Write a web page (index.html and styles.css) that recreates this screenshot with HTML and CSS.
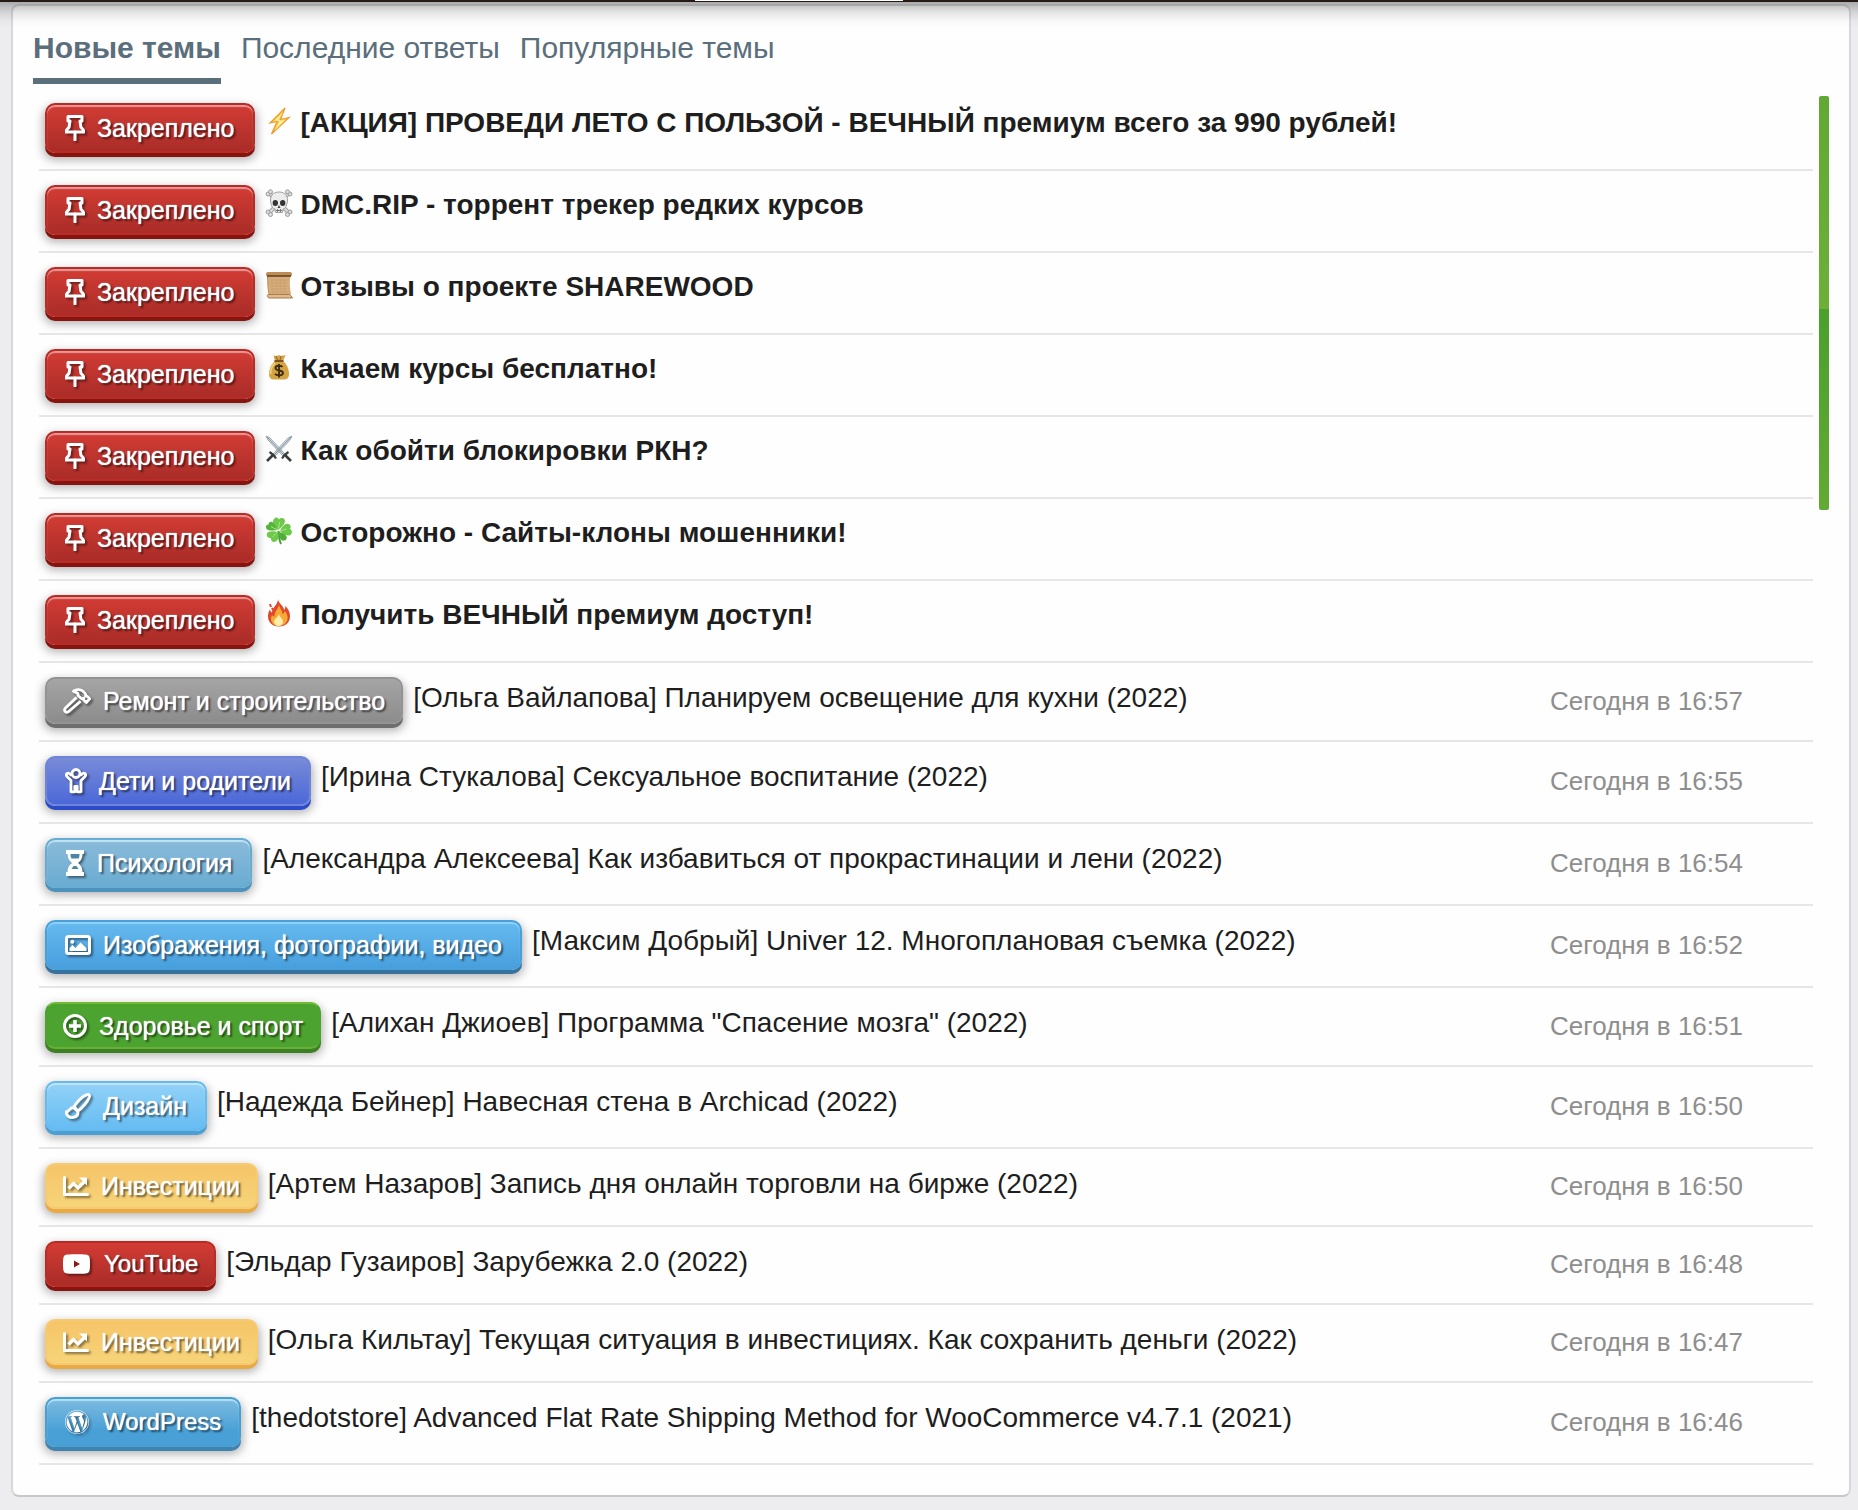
FILE: index.html
```html
<!DOCTYPE html>
<html lang="ru">
<head>
  <meta charset="UTF-8">
  <meta name="viewport" content="width=device-width, initial-scale=1.0">
  <title>Новые темы</title>
  <link rel="stylesheet" href="styles.css">
</head>
<body>
  <svg class="sprite" aria-hidden="true">
    <symbol id="pin" viewBox="1 0 20 26">
      <path d="M4 1.500h14v4.500h-2l1 6.500c1.700 1 2.700 2.500 2.900 4.500H2.100c.2-2 1.200-3.500 2.900-4.500l1-6.500H4z" fill="none" stroke="#fff" stroke-width="3" stroke-linejoin="round"/>
      <path d="M11 17v8" stroke="#fff" stroke-width="3" stroke-linecap="round"/>
    </symbol>
    <symbol id="hammer" viewBox="0 0 28 26">
      <path d="M13.500 9.500L2.200 20.300c-1.700 2.300.8 5.100 3.200 3.400L17.500 13.200" fill="none" stroke="#fff" stroke-width="2.800" stroke-linejoin="round"/>
      <path d="M10.500 3.200c3-2.200 7.500-2.200 10.200.6l2 2.300-.2 2.100 1.700-.1 2.500 2.700-3.400 3.700-2.700-2.500.1-1.600-2 .3-3.700-3.200V5.500z" fill="none" stroke="#fff" stroke-width="2.800" stroke-linejoin="round"/>
    </symbol>
    <symbol id="child" viewBox="0 0 22 26">
      <circle cx="11" cy="5.500" r="4" fill="none" stroke="#fff" stroke-width="2.800"/>
      <path d="M6.500 7.500L4 5.300C1.500 4.500.7 6.800 2 8.500l4 4v11.300h3.800V18.500h2.400v5.300H16V12.500l4-4c1.300-1.700.5-4-2-3.200l-2.500 2.200" fill="none" stroke="#fff" stroke-width="2.800" stroke-linejoin="round"/>
    </symbol>
    <symbol id="hourglass" viewBox="0 0 20 26">
      <path d="M1 0h18v4h-1.500c0 4-1.500 7-4.500 9 3 2 4.500 5 4.500 9H19v4H1v-4h1.500c0-4 1.500-7 4.500-9-3-2-4.500-5-4.500-9H1z" fill="#fff"/>
      <path d="M5.500 4h9c0 2-.3 3.500-1 4.500h-7c-.7-1-1-2.500-1-4.500z" fill="#4b86a8"/>
      <path d="M8.500 16h3l2 3h-7z" fill="#4b86a8"/>
    </symbol>
    <symbol id="image" viewBox="0 0 26 20">
      <rect x="1.500" y="1.500" width="23" height="17" rx="2" fill="none" stroke="#fff" stroke-width="3"/>
      <circle cx="7.300" cy="6.800" r="2" fill="#fff"/>
      <path d="M4.500 16v-3l3-3 3 3 5-5.500 6 5.500v3z" fill="#fff"/>
    </symbol>
    <symbol id="plus" viewBox="0 0 24 24">
      <circle cx="12" cy="12" r="10.500" fill="none" stroke="#fff" stroke-width="3"/>
      <path d="M12 6v12M6 12h12" stroke="#fff" stroke-width="3.600"/>
    </symbol>
    <symbol id="brush" viewBox="0 0 26 26">
      <path d="M9 13.500C12 9 17 3.500 22 1.600c2-.6 3 .6 2.400 2.400C22.500 9 17 15.500 12.800 18z" fill="none" stroke="#fff" stroke-width="2.800" stroke-linejoin="round"/>
      <path d="M8.300 14.500c-4 0-4 4.200-7.300 4.500 1 4.500 4.500 5.700 7.500 5.300 3-.5 4.700-2.800 4.300-5.800z" fill="none" stroke="#fff" stroke-width="3" stroke-linejoin="round"/>
    </symbol>
    <symbol id="chart" viewBox="0 0 26 20">
      <path d="M1.500 1.500v17H24.500" fill="none" stroke="#fff" stroke-width="3" stroke-linecap="round" stroke-linejoin="round"/>
      <path d="M5.500 12.500l5-5 4.500 4.500 7-7" fill="none" stroke="#fff" stroke-width="3.200"/>
      <path d="M16 1.500h8v8z" fill="#fff"/>
    </symbol>
    <symbol id="youtube" viewBox="0 0 27 20">
      <path d="M4 .6C9 0 18 0 23 .6c2.300.3 3.400 1.400 3.700 3.600.5 4 .5 7.600 0 11.600-.3 2.200-1.400 3.300-3.700 3.600-5 .6-14 .6-19 0C1.700 19.100.6 18 .3 15.800c-.5-4-.5-7.600 0-11.600C.6 2 1.700.9 4 .6z" fill="#fff"/>
      <path d="M11 6.500v7l6-3.500z" fill="#8e1a17"/>
    </symbol>
    <symbol id="wordpress" viewBox="8 8 496 496">
      <path fill="#fff" d="M61.7 169.4l101.500 278C92.200 413 43.300 340.200 43.300 256c0-30.900 6.600-60.100 18.400-86.600zm337.900 75.900c0-26.300-9.400-44.500-17.500-58.700-10.800-17.500-20.900-32.400-20.900-49.900 0-19.600 14.800-37.800 35.700-37.800.9 0 1.800.1 2.800.2-37.900-34.700-88.300-55.900-143.700-55.900-74.300 0-139.700 38.100-177.800 95.900 5 .2 9.700.3 13.700.3 22.200 0 56.700-2.700 56.700-2.700 11.500-.7 12.800 16.200 1.400 17.500 0 0-11.500 1.300-24.300 2l77.500 230.400L249.800 247l-33.100-90.800c-11.500-.7-22.300-2-22.300-2-11.500-.7-10.100-18.200 1.300-17.500 0 0 35.100 2.700 56 2.700 22.200 0 56.700-2.700 56.700-2.700 11.500-.7 12.800 16.200 1.400 17.500 0 0-11.500 1.300-24.300 2l76.900 228.700 21.200-70.900c9-29.400 16-50.500 16-68.700zm-139.900 29.300l-63.800 185.500c19.100 5.600 39.200 8.700 60.100 8.700 24.800 0 48.500-4.300 70.600-12.100-.6-.9-1.100-1.900-1.500-2.900l-65.400-179.200zm183-120.700c.9 6.800 1.400 14 1.400 21.900 0 21.600-4 45.800-16.200 76.200l-65 187.900C426.200 403 468.700 334.500 468.700 256c0-37-9.400-71.800-26-102.100zM504 256c0 136.800-111.300 248-248 248C119.200 504 8 392.700 8 256 8 119.200 119.200 8 256 8c136.700 0 248 111.200 248 248zm-11.400 0c0-130.500-106.200-236.600-236.600-236.600C125.500 19.400 19.400 125.500 19.400 256S125.600 492.600 256 492.600c130.500 0 236.600-106.100 236.600-236.600z"/>
    </symbol>
  </svg>

  <header class="topbar"><div class="topbar-search"></div></header>

  <main class="panel">
    <nav class="tabs">
      <a class="tab active" href="#new">Новые темы</a>
      <a class="tab" href="#replies">Последние ответы</a>
      <a class="tab" href="#popular">Популярные темы</a>
    </nav>

    <div class="content">
      <ul class="topics">
        <li class="topic pinned">
          <a class="prefix red" href="#"><svg class="icon" width="20" height="26"><use href="#pin"/></svg>Закреплено</a>
          <svg class="emoji" viewBox="0 0 28 28"><path d="M20 1L5 16l7-1.500L6.500 27 24 10.500l-8.500 2z" fill="#f9c74a" stroke="#ee9c2c" stroke-width="1.200"/><path d="M18 5l-9 9 6-1-5 10 10-10-7 1z" fill="#fff0a0"/></svg>
          <a class="title" href="#">[АКЦИЯ] ПРОВЕДИ ЛЕТО С ПОЛЬЗОЙ - ВЕЧНЫЙ премиум всего за 990 рублей!</a>
        </li>
        <li class="topic pinned">
          <a class="prefix red" href="#"><svg class="icon" width="20" height="26"><use href="#pin"/></svg>Закреплено</a>
          <svg class="emoji" viewBox="0 0 28 28">
            <path d="M4 4l20 20M24 4L4 24" stroke="#9b9b9b" stroke-width="4"/>
            <path d="M4 4l20 20M24 4L4 24" stroke="#dedede" stroke-width="2"/>
            <g fill="#ddd" stroke="#9b9b9b"><circle cx="3" cy="5" r="2"/><circle cx="5.500" cy="2.800" r="2"/><circle cx="25" cy="5" r="2"/><circle cx="22.500" cy="2.800" r="2"/><circle cx="3" cy="23" r="2"/><circle cx="5.500" cy="25.500" r="2"/><circle cx="25" cy="23" r="2"/><circle cx="22.500" cy="25.500" r="2"/></g>
            <path d="M14 3c6 0 8.500 4 8.500 8 0 3-1 4.500-1.500 6.500-.5 2-2 2-3 2.500l-.5 3.500h-7L10 20c-1-.5-2.500-.5-3-2.500S5.500 14 5.500 11c0-4 2.500-8 8.500-8z" fill="#ececec" stroke="#a0a0a0"/>
            <ellipse cx="10.300" cy="14" rx="2.700" ry="3" fill="#333"/><ellipse cx="17.700" cy="14" rx="2.700" ry="3" fill="#333"/><path d="M14 16l-1.500 3h3z" fill="#444"/><path d="M11 21.500h6M12.500 20v3M15.500 20v3" stroke="#777"/>
          </svg>
          <a class="title" href="#">DMC.RIP - торрент трекер редких курсов</a>
        </li>
        <li class="topic pinned">
          <a class="prefix red" href="#"><svg class="icon" width="20" height="26"><use href="#pin"/></svg>Закреплено</a>
          <svg class="emoji" viewBox="0 0 28 28">
            <path d="M2.500 4h23c-1 6-1 12 .5 19H4c-1.500-6-1-12-1.500-19z" fill="#d5ab78"/>
            <path d="M2.500 4c.5 8 0 13 1.500 19" stroke="#b78b58" fill="none"/>
            <path d="M6 9h16M6 12h15M6 15h16M6 18h15M7 21h15" stroke="#c29a6c" stroke-dasharray="3 1"/>
            <rect x="1" y="1" width="26" height="4.500" rx="2" fill="#bd8c56"/><path d="M2 5h24" stroke="#604020" stroke-width="1.500"/>
            <path d="M3 23.500h22l2.500 3.500H4c-2-.5-2-3-1-3.500z" fill="#dfba8a" stroke="#a77b4e"/>
          </svg>
          <a class="title" href="#">Отзывы о проекте SHAREWOOD</a>
        </li>
        <li class="topic pinned">
          <a class="prefix red" href="#"><svg class="icon" width="20" height="26"><use href="#pin"/></svg>Закреплено</a>
          <svg class="emoji" viewBox="0 0 28 28">
            <path d="M10 8L8.500 2.500 12 3l2-1 2 1 4.500-1L18 8c4 3 6.500 9 6 14-.3 3-2 4.500-5 4.500H9c-3 0-4.700-1.500-5-4.500-.5-5 2-11 6-14z" fill="#d4a443"/>
            <path d="M10 10c-3 3-5 7-4.500 11" fill="none" stroke="#efcd78" stroke-width="2"/>
            <path d="M9.500 8h9" stroke="#80521e" stroke-width="2"/><path d="M11 3l1.500 4M16 3l-1 4" stroke="#8c642b"/>
            <path d="M17.500 14c-1-1.500-7-2-7 1 0 3.500 7.500 1.500 7.500 5 0 3-6.500 3-8 .8M14 11v13.500" fill="none" stroke="#3d2d12" stroke-width="1.900"/>
          </svg>
          <a class="title" href="#">Качаем курсы бесплатно!</a>
        </li>
        <li class="topic pinned">
          <a class="prefix red" href="#"><svg class="icon" width="20" height="26"><use href="#pin"/></svg>Закреплено</a>
          <svg class="emoji" viewBox="0 0 28 28">
            <path d="M1 1l4 2 15 16-2 2L3 5zM27 1l-4 2L8 19l2 2L25 5z" fill="#dce6eb" stroke="#9aa8af"/>
            <path d="M2 2l17 18M26 2L9 20" stroke="#7d8b93"/>
            <path d="M20 20l6 6M8 20l-6 6" stroke="#3b3b3b" stroke-width="2.600"/><path d="M17 23.500c1-2 4-5 6.500-6.500M11 23.500c-1-2-4-5-6.500-6.500" stroke="#3b3b3b" stroke-width="2.200" fill="none"/>
          </svg>
          <a class="title" href="#">Как обойти блокировки РКН?</a>
        </li>
        <li class="topic pinned">
          <a class="prefix red" href="#"><svg class="icon" width="20" height="26"><use href="#pin"/></svg>Закреплено</a>
          <svg class="emoji" viewBox="0 0 28 28">
            <path d="M13.500 14c.5 5 .5 9 2.500 13" stroke="#4a9c35" stroke-width="2" fill="none"/>
            <g fill="#6cc94a"><path d="M13 13C7 8 7 3 10 1c2-1 3 0 4 1.500C16 0 20 1 20 4c0 3-3 6-7 9z"/><path d="M15 14c2-5 6-9 9.500-6.500 2 1.500 1 3.500.5 4.500 3 1.500 2.500 6-1 6.500-3 .5-6-1.500-9-4.500z"/><path d="M13 15c2 6-1 10-4 10-2.500 0-3-2-3-4-3 0-5-2-4-4.500 1-2.500 6-3 11-1.500z"/></g>
            <path d="M12 13C7 14 1.500 14 1 10.500c-.3-2 1-3 2.500-3C3.500 5 6 4 8 5.500s3 4.500 4 7.500z" fill="#55b43b"/>
            <path d="M14 15c5 1 9 4 7.500 7-1 2-5 3-6.500-1-1-2-1-4-1-6z" fill="#4fae38"/>
            <path d="M13.500 13l1-8M14.500 14l7-2M12.500 15l-5 5M12 13L6 9.500" stroke="#a8e684"/>
          </svg>
          <a class="title" href="#">Осторожно - Сайты-клоны мошенники!</a>
        </li>
        <li class="topic pinned">
          <a class="prefix red" href="#"><svg class="icon" width="20" height="26"><use href="#pin"/></svg>Закреплено</a>
          <svg class="emoji" viewBox="0 0 28 28">
            <path d="M13 0c0 4 6 7 6 11 1-1 1.500-2.500 1.300-4C23 9.500 25 13 25 17c0 6-4 10.500-11 10.500S3 23 3 17c0-3 1-5 2-6.500.3 1.500 1 2.500 2 3C7 8 13 6 13 0z" fill="#e0472c"/>
            <path d="M14 5c0 4 3.500 6 3.500 10 1.500-.5 2-2 2.500-3 2 3 3 5 2.500 8-.7 4-4 7-8.500 7s-8-3-8-7c0-2 .5-3 1-4 1 1 1.500 1.500 2.500 1.500C9 12 14 10 14 5z" fill="#f7a936"/>
            <path d="M14 15c0 3 4.500 4.500 4 8-.3 2.500-2 4-4.500 4S9 25 9 22.500c0-3 4-3.500 5-7.500z" fill="#ffefaa"/><path d="M5 5l1 3M7 9l1 2" stroke="#e0472c" stroke-width="2"/>
          </svg>
          <a class="title" href="#">Получить ВЕЧНЫЙ премиум доступ!</a>
        </li>
        <li class="topic">
          <a class="prefix gray" href="#"><svg class="icon" width="28" height="26"><use href="#hammer"/></svg>Ремонт и строительство</a>
          <a class="title" href="#">[Ольга Вайлапова] Планируем освещение для кухни (2022)</a>
          <time class="date">Сегодня в 16:57</time>
        </li>
        <li class="topic">
          <a class="prefix indigo" href="#"><svg class="icon" width="22" height="26"><use href="#child"/></svg>Дети и родители</a>
          <a class="title" href="#">[Ирина Стукалова] Сексуальное воспитание (2022)</a>
          <time class="date">Сегодня в 16:55</time>
        </li>
        <li class="topic">
          <a class="prefix steel" href="#"><svg class="icon" width="20" height="26"><use href="#hourglass"/></svg>Психология</a>
          <a class="title" href="#">[Александра Алексеева] Как избавиться от прокрастинации и лени (2022)</a>
          <time class="date">Сегодня в 16:54</time>
        </li>
        <li class="topic">
          <a class="prefix blue" href="#"><svg class="icon" width="26" height="20"><use href="#image"/></svg>Изображения, фотографии, видео</a>
          <a class="title" href="#">[Максим Добрый] Univer 12. Многоплановая съемка (2022)</a>
          <time class="date">Сегодня в 16:52</time>
        </li>
        <li class="topic">
          <a class="prefix green" href="#"><svg class="icon" width="24" height="24"><use href="#plus"/></svg>Здоровье и спорт</a>
          <a class="title" href="#">[Алихан Джиоев] Программа "Спасение мозга" (2022)</a>
          <time class="date">Сегодня в 16:51</time>
        </li>
        <li class="topic">
          <a class="prefix sky" href="#"><svg class="icon" width="26" height="26"><use href="#brush"/></svg>Дизайн</a>
          <a class="title" href="#">[Надежда Бейнер] Навесная стена в Archicad (2022)</a>
          <time class="date">Сегодня в 16:50</time>
        </li>
        <li class="topic">
          <a class="prefix yellow" href="#"><svg class="icon" width="26" height="20"><use href="#chart"/></svg>Инвестиции</a>
          <a class="title" href="#">[Артем Назаров] Запись дня онлайн торговли на бирже (2022)</a>
          <time class="date">Сегодня в 16:50</time>
        </li>
        <li class="topic">
          <a class="prefix red flat brand" href="#"><svg class="icon" width="27" height="20"><use href="#youtube"/></svg>YouTube</a>
          <a class="title" href="#">[Эльдар Гузаиров] Зарубежка 2.0 (2022)</a>
          <time class="date">Сегодня в 16:48</time>
        </li>
        <li class="topic">
          <a class="prefix yellow" href="#"><svg class="icon" width="26" height="20"><use href="#chart"/></svg>Инвестиции</a>
          <a class="title" href="#">[Ольга Кильтау] Текущая ситуация в инвестициях. Как сохранить деньги (2022)</a>
          <time class="date">Сегодня в 16:47</time>
        </li>
        <li class="topic">
          <a class="prefix azure brand" href="#"><svg class="icon" width="24" height="24"><use href="#wordpress"/></svg>WordPress</a>
          <a class="title" href="#">[thedotstore] Advanced Flat Rate Shipping Method for WooCommerce v4.7.1 (2021)</a>
          <time class="date">Сегодня в 16:46</time>
        </li>
      </ul>
      <div class="scrollbar"></div>
    </div>
  </main>
</body>
</html>
```
FILE: styles.css
```css
* {
  box-sizing: border-box;
}
body {
  margin: 0;
  background: #ededef;
  font-family: "Liberation Sans", Arial, sans-serif;
  color: #1e1e1e;
}
a {
  color: inherit;
  text-decoration: none;
}
.sprite {
  display: none;
}

/* header edge with its shadow over the page */
.topbar {
  position: relative;
  height: 2px;
  background: #261a15;
}
.topbar::after {
  content: "";
  position: absolute;
  top: 2px;
  left: 0;
  right: 0;
  height: 26px;
  background: linear-gradient(rgba(0, 0, 0, .28), rgba(0, 0, 0, .1) 40%, rgba(0, 0, 0, .02) 75%, transparent);
  pointer-events: none;
}
.topbar-search {
  width: 208px;
  height: 1px;
  margin-left: 695px;
  background: #fff;
}

.panel {
  margin: 2px 7px 11px 11px;
  padding: 0 20px 30px;
  background: #fefefe;
  border: 2px solid #d8d8d8;
  border-bottom-color: #c8c8c8;
  border-radius: 8px;
}

/* tabs */
.tabs {
  display: flex;
  gap: 20px;
}
.tab {
  padding: 25px 0 13px;
  font-size: 30px;
  line-height: 34px;
  color: #5a6e7b;
  border-bottom: 6px solid transparent;
}
.tab.active {
  font-weight: bold;
  border-bottom-color: #5a6e7b;
}

/* topics */
.content {
  display: flex;
  align-items: flex-start;
  gap: 6px;
  padding: 5px 0 0 6px;
}
.topics {
  flex: 1;
  margin: 0;
  padding: 0;
  list-style: none;
}
.topic {
  display: flex;
  align-items: flex-start;
  padding: 14px 0 12px 6px;
  border-bottom: 2px solid #e6e6e6;
}
.title {
  flex: 1;
  margin: 4px 0 0 10px;
  font-size: 28px;
  line-height: 34px;
}
.pinned .title {
  margin: 3px 0 0 8px;
  font-weight: bold;
}
.emoji {
  width: 28px;
  height: 28px;
  margin: 4px 0 0 10px;
}
.date {
  width: 263px;
  padding-bottom: 4px;
  align-self: center;
  font-size: 26px;
  line-height: 30px;
  color: #8e8e8e;
}

.prefix {
  display: flex;
  align-items: center;
  gap: 12px;
  margin-bottom: 4px;
  padding: 9px 18px;
  border: 2px solid;
  border-radius: 10px;
  font-size: 25px;
  line-height: 28px;
  color: #fff;
  text-shadow: 0 0 1px #fff, 2px 2px 2px rgba(0, 0, 0, .6);
  box-shadow: 0 4px 0 var(--edge), 0 5px 10px 2px rgba(0, 0, 0, .3), inset 0 2px 1px var(--shine);
}
.icon {
  filter: drop-shadow(2px 2px 1px rgba(0, 0, 0, .45));
}
.red {
  --edge: #87150f;
  --shine: #e39a96;
  border-color: #bb2b26;
  background: linear-gradient(#d23c34, #aa2c28);
}
.gray {
  --edge: #6e6e6e;
  --shine: #a5a5a5;
  padding: 8px 16px 7px;
  border-color: #939393;
  background: linear-gradient(#a5a5a5, #8c8c8c);
}
.indigo {
  --edge: #2b4bc9;
  --shine: #788bd8;
  border-color: #6f83d8;
  background: linear-gradient(#788bd8, #4b68d8);
}
.steel {
  --edge: #4b93bd;
  --shine: #c3e3f3;
  border-color: #67acd2;
  background: linear-gradient(#8bbbda, #6aacd2);
}
.blue {
  --edge: #36729b;
  --shine: #90d2f8;
  border-color: #48a0da;
  background: linear-gradient(#66baf0, #489fdc);
}
.green {
  --edge: #3d8024;
  --shine: #4ca32f;
  padding: 8px 16px 7px;
  border-color: #72b936 #4ca32f #66b038;
  background: #4ca32f;
}
.sky {
  --edge: #4b9fd3;
  --shine: #c4e3f6;
  border-color: #65baf0;
  background: linear-gradient(#92d2f8, #66bcf2);
}
.yellow {
  --edge: #e9aa43;
  --shine: #f6c66a;
  padding: 7px 16px;
  border-color: #f6ca70;
  background: linear-gradient(#f6c468, #f7d478);
}
.azure {
  --edge: #3f83b0;
  --shine: #b3e1f7;
  border-color: #489fd2;
  background: linear-gradient(#7dbbe0, #48a0d6 70%);
}
.flat {
  --shine: #d23c34;
  padding: 7px 16px;
}
.brand {
  gap: 14px;
  font-size: 24px;
}

.scrollbar {
  width: 10px;
  height: 414px;
  margin-top: 7px;
  border-radius: 2px;
  background: linear-gradient(#62a834, #6cb038 213px, #4aa02c 213px, #62aa34);
}
```
